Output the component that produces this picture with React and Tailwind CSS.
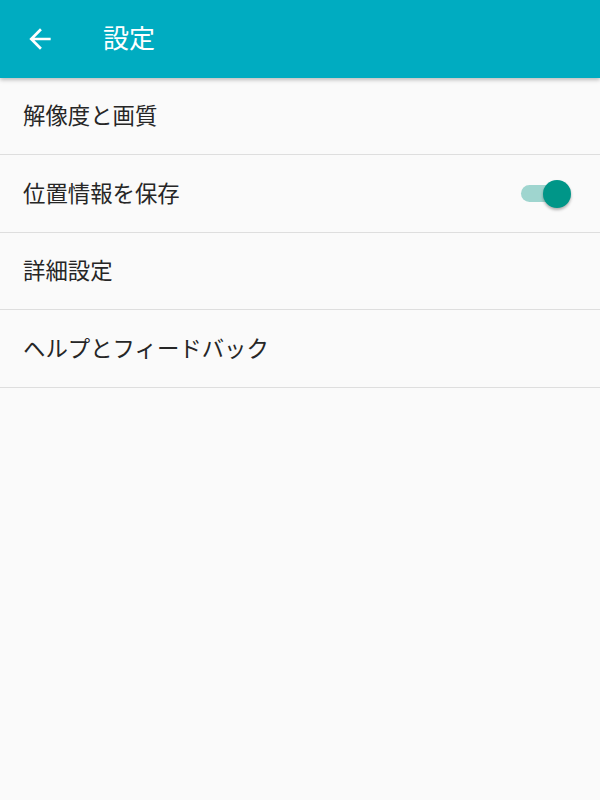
import { useState } from "react";

const font = { fontFamily: '"Roboto", "Noto Sans CJK JP", sans-serif' };

function Toggle({ on, onChange }) {
  return (
    <button
      type="button"
      onClick={() => onChange(!on)}
      className="relative flex h-[30px] w-[54px] items-center"
    >
      <span className={`ml-[2px] h-[17px] w-[38px] rounded-full ${on ? "bg-[#9fd5cf]" : "bg-[#bdbdbd]"}`} />
      <span
        className={`absolute top-[1px] h-[28px] w-[28px] rounded-full shadow-[0_2px_3px_rgba(0,0,0,0.3)] ${on ? "left-[24px] bg-[#009688]" : "left-0 bg-[#f1f1f1]"}`}
      />
    </button>
  );
}

function Row({ label, children }) {
  return (
    <div className="flex h-[77.4px] items-center justify-between border-b-[1.5px] border-[#dedede] pl-[23px] pr-[27px]">
      <span className="pt-[2px] text-[22.4px] text-[#262626]">{label}</span>
      {children}
    </div>
  );
}

export default function App() {
  const [saveLocation, setSaveLocation] = useState(true);

  return (
    <div className="min-h-[800px] bg-[#fafafa]" style={font}>
      <header className="relative z-10 flex h-[78px] items-center bg-[#00acc1] shadow-[0_2px_4px_rgba(0,0,0,0.25)]">
        <button type="button" className="ml-[24px] flex h-[32px] w-[32px] items-center justify-center text-white">
          <svg width="32" height="32" viewBox="0 0 24 24" fill="currentColor">
            <path d="M20 11H7.83l5.59-5.59L12 4l-8 8 8 8 1.41-1.41L7.83 13H20v-2z" />
          </svg>
        </button>
        <h1 className="ml-[47px] text-[26px] text-white">設定</h1>
      </header>
      <Row label="解像度と画質" />
      <Row label="位置情報を保存">
        <Toggle on={saveLocation} onChange={setSaveLocation} />
      </Row>
      <Row label="詳細設定" />
      <Row label="ヘルプとフィードバック" />
    </div>
  );
}
